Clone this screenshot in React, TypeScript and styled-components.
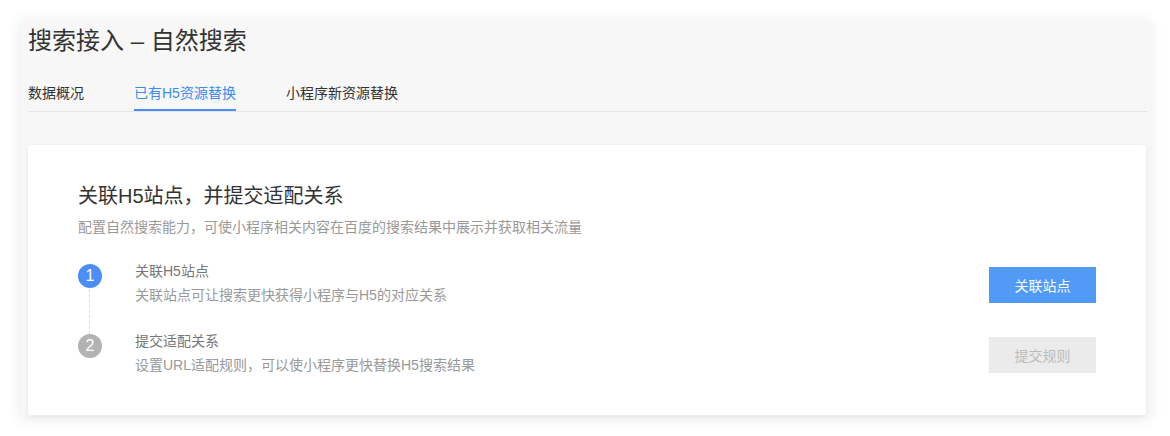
import React from "react";
import styled, { createGlobalStyle } from "styled-components";

const GlobalStyle = createGlobalStyle`
  html, body {
    margin: 0;
    padding: 0;
    background: #ffffff;
  }
  body {
    font-family: "Liberation Sans", "Noto Sans CJK SC", sans-serif;
    color: #333;
  }
`;

const Page = styled.div`
  padding: 20px 20px 16px 20px;
`;

const Panel = styled.div`
  background: #f7f7f7;
  box-shadow: 0 2px 14px rgba(0, 0, 0, 0.09);
  padding: 5px 4px 1px 8px;
`;

const Title = styled.h1`
  margin: 0;
  font-size: 24px;
  line-height: 32px;
  font-weight: 400;
  color: #333;
`;

const TabBar = styled.div`
  display: flex;
  gap: 50px;
  margin-top: 26px;
  margin-right: -1px;
  border-bottom: 1px solid #e4e4e4;
`;

const Tab = styled.div<{ $active?: boolean }>`
  font-size: 14px;
  line-height: 20px;
  padding-bottom: 6px;
  border-bottom: 2px solid ${(p) => (p.$active ? "#4a8ef2" : "transparent")};
  color: ${(p) => (p.$active ? "#3d8af0" : "#333")};
  cursor: pointer;
`;

const Card = styled.div`
  margin-top: 33px;
  background: #ffffff;
  box-shadow: 0 1px 4px rgba(0, 0, 0, 0.08);
  border-radius: 2px;
  padding: 37px 50px 38px 50px;
`;

const Heading = styled.h2`
  margin: 0;
  font-size: 20px;
  line-height: 28px;
  font-weight: 400;
  color: #333;
`;

const Sub = styled.p`
  margin: 7px 0 0 0;
  font-size: 14px;
  line-height: 20px;
  color: #999;
`;

const Steps = styled.div`
  margin-top: 22px;
  display: flex;
  flex-direction: column;
  gap: 22px;
`;

const Step = styled.div`
  display: flex;
  align-items: flex-start;
`;

const Marker = styled.div<{ $active?: boolean; $line?: boolean }>`
  position: relative;
  flex: none;
  width: 24px;
  height: 24px;
  margin-top: 5px;
  border-radius: 50%;
  background: ${(p) => (p.$active ? "#4b8ef5" : "#b3b3b3")};
  color: #fff;
  font-size: 16px;
  line-height: 24px;
  text-align: center;
  &::after {
    content: "";
    display: ${(p) => (p.$line ? "block" : "none")};
    position: absolute;
    left: 11px;
    top: 25px;
    height: 45px;
    border-left: 1px dashed #d9d9d9;
  }
`;

const StepText = styled.div`
  flex: 1;
  margin-left: 33px;
  font-size: 14px;
  line-height: 24px;
`;

const StepTitle = styled.div`
  color: #777;
`;

const StepDesc = styled.div`
  color: #999;
`;

const Button = styled.button<{ $primary?: boolean }>`
  flex: none;
  margin-top: 8px;
  width: 107px;
  height: 36px;
  border: none;
  border-radius: 0;
  font-family: inherit;
  font-size: 14px;
  background: ${(p) => (p.$primary ? "#519af5" : "#ebebeb")};
  color: ${(p) => (p.$primary ? "#ffffff" : "#bbbbbb")};
  cursor: ${(p) => (p.$primary ? "pointer" : "not-allowed")};
`;

export default function App() {
  return (
    <>
      <GlobalStyle />
      <Page>
        <Panel>
          <Title>搜索接入 – 自然搜索</Title>
          <TabBar>
            <Tab>数据概况</Tab>
            <Tab $active>已有H5资源替换</Tab>
            <Tab>小程序新资源替换</Tab>
          </TabBar>
          <Card>
            <Heading>关联H5站点，并提交适配关系</Heading>
            <Sub>配置自然搜索能力，可使小程序相关内容在百度的搜索结果中展示并获取相关流量</Sub>
            <Steps>
              <Step>
                <Marker $active $line>1</Marker>
                <StepText>
                  <StepTitle>关联H5站点</StepTitle>
                  <StepDesc>关联站点可让搜索更快获得小程序与H5的对应关系</StepDesc>
                </StepText>
                <Button $primary>关联站点</Button>
              </Step>
              <Step>
                <Marker>2</Marker>
                <StepText>
                  <StepTitle>提交适配关系</StepTitle>
                  <StepDesc>设置URL适配规则，可以使小程序更快替换H5搜索结果</StepDesc>
                </StepText>
                <Button disabled>提交规则</Button>
              </Step>
            </Steps>
          </Card>
        </Panel>
      </Page>
    </>
  );
}
